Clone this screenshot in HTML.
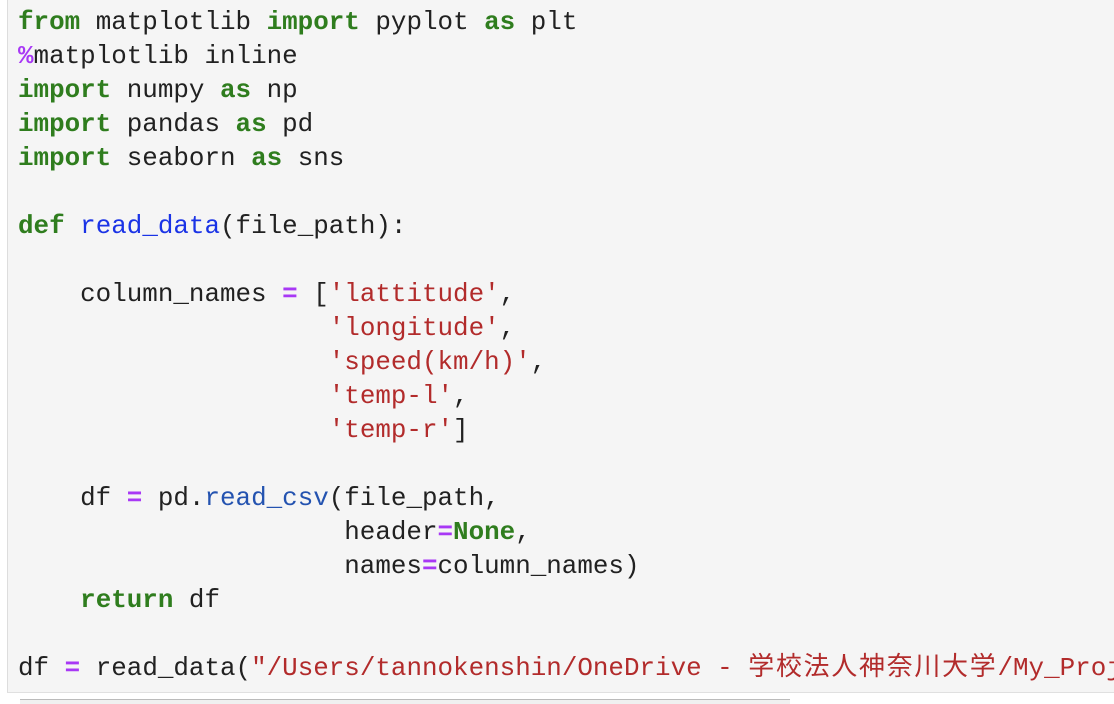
<!DOCTYPE html>
<html><head><meta charset="utf-8"><style>
html,body{margin:0;padding:0;width:1114px;height:704px;overflow:hidden;background:#fff;}
.cell{position:absolute;left:7px;top:-2px;width:1120px;height:694px;background:#f5f5f5;border-left:1px solid #ddd;border-bottom:1px solid #e0e0e0;}
pre{margin:0;position:absolute;left:10px;top:7px;font-family:"Liberation Mono","Noto Sans CJK JP",monospace;font-size:25.9px;line-height:34px;color:#212121;white-space:pre;}
.k{color:#2f7d1e;font-weight:bold}
.o{color:#a838f5;font-weight:bold}
.s{color:#b22b2b}
.f{color:#1a33e6}
.m{color:#2453b0}
.j{letter-spacing:1.8px}
.bar{position:absolute;left:20px;top:699px;width:770px;height:4px;border-top:1px solid #bbb;background:#f0f0f0;}
</style></head><body>
<div class="cell"><pre><span class="k">from</span> matplotlib <span class="k">import</span> pyplot <span class="k">as</span> plt
<span class="o">%</span>matplotlib inline
<span class="k">import</span> numpy <span class="k">as</span> np
<span class="k">import</span> pandas <span class="k">as</span> pd
<span class="k">import</span> seaborn <span class="k">as</span> sns

<span class="k">def</span> <span class="f">read_data</span>(file_path):

    column_names <span class="o">=</span> [<span class="s">'lattitude'</span>,
                    <span class="s">'longitude'</span>,
                    <span class="s">'speed(km/h)'</span>,
                    <span class="s">'temp-l'</span>,
                    <span class="s">'temp-r'</span>]

    df <span class="o">=</span> pd.<span class="m">read_csv</span>(file_path,
                     header<span class="o">=</span><span class="k">None</span>,
                     names<span class="o">=</span>column_names)
    <span class="k">return</span> df

df <span class="o">=</span> read_data(<span class="s">"/Users/tannokenshin/OneDrive - <span class="j">学校法人神奈川大学</span>/My_Project</span></pre></div>
<div class="bar"></div>
</body></html>
